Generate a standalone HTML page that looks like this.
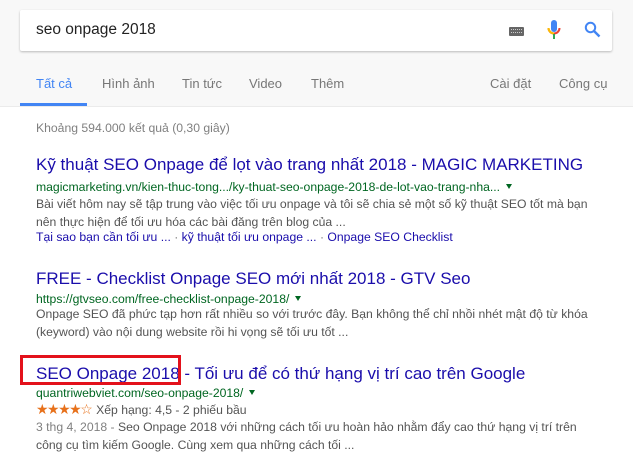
<!DOCTYPE html>
<html><head><meta charset="utf-8"><style>
body{margin:0;width:633px;height:460px;overflow:hidden;background:#fff;font-family:"Liberation Sans",Arial,sans-serif;position:relative}
.top{position:absolute;left:0;top:0;width:633px;height:106px;background:#f8f8f8;border-bottom:1px solid #ebebeb}
.a{position:absolute;white-space:nowrap}
.tab{position:absolute;top:76px;font-size:13px;color:#777;white-space:nowrap}
.t{font-size:17px;color:#1a0dab}
.u{font-size:12.2px;color:#006621}
.s{font-size:12.2px;color:#545454}
.l{font-size:12.2px;color:#1a0dab}
.tri{display:inline-block;width:0;height:0;border-left:3.5px solid transparent;border-right:3.5px solid transparent;border-top:5px solid #006621;margin-left:6px;vertical-align:2px}
</style></head><body>
<div class="top"></div>
<div style="position:absolute;left:20px;top:10px;width:592px;height:41px;background:#fff;box-shadow:0 1px 2px rgba(0,0,0,.25);border-radius:2px"></div>
<div class="a" style="left:36px;top:21px;font-size:15.5px;color:#222">seo onpage 2018</div>
<div style="position:absolute;left:509px;top:27px;width:15px;height:9px;background:#666;border-radius:1px"></div>
<div style="position:absolute;left:511px;top:29px;width:11px;height:2px;border-top:1px dotted #ccc;border-bottom:1px dotted #ccc"></div>
<svg style="position:absolute;left:547px;top:19px" width="14" height="22" viewBox="0 0 14 22"><rect x="4" y="1" width="6" height="12" rx="3" fill="#4285f4"/><path d="M1.5 9a5.5 5.5 0 0 0 11 0" stroke="#ea4335" stroke-width="2" fill="none"/><path d="M1.5 9a5.5 5.5 0 0 0 5.5 5.5" stroke="#fbbc05" stroke-width="2" fill="none"/><rect x="6" y="15" width="2" height="5" fill="#34a853"/></svg>
<svg style="position:absolute;left:584px;top:21px" width="17" height="17" viewBox="0 0 17 17"><circle cx="6.5" cy="6.5" r="4.7" stroke="#4285f4" stroke-width="2" fill="none"/><path d="M10 10l5.5 5.5" stroke="#4285f4" stroke-width="2.4"/></svg>
<div class="tab" style="left:36px;color:#4285f4">Tất cả</div>
<div class="tab" style="left:102px">Hình ảnh</div>
<div class="tab" style="left:182px">Tin tức</div>
<div class="tab" style="left:249px">Video</div>
<div class="tab" style="left:311px">Thêm</div>
<div class="tab" style="left:490px">Cài đặt</div>
<div class="tab" style="left:559px">Công cụ</div>
<div style="position:absolute;left:20px;top:103px;width:67px;height:3px;background:#4285f4"></div>
<div class="a" style="left:36px;top:121px;font-size:12.2px;color:#808080">Khoảng 594.000 kết quả (0,30 giây)</div>

<div class="a t" style="left:36px;top:155px">Kỹ thuật SEO Onpage để lọt vào trang nhất 2018 - MAGIC MARKETING</div>
<div class="a u" style="left:36px;top:180px">magicmarketing.vn/kien-thuc-tong.../ky-thuat-seo-onpage-2018-de-lot-vao-trang-nha...<span class="tri"></span></div>
<div class="a s" style="left:36px;top:197px">Bài viết hôm nay sẽ tập trung vào việc tối ưu onpage và tôi sẽ chia sẻ một số kỹ thuật SEO tốt mà bạn</div>
<div class="a s" style="left:36px;top:215px">nên thực hiện để tối ưu hóa các bài đăng trên blog của ...</div>
<div class="a l" style="left:36px;top:230px">Tại sao bạn cần tối ưu ... <span style="color:#777">·</span> kỹ thuật tối ưu onpage ... <span style="color:#777">·</span> Onpage SEO Checklist</div>

<div class="a t" style="left:36px;top:269px">FREE - Checklist Onpage SEO mới nhất 2018 - GTV Seo</div>
<div class="a u" style="left:36px;top:292px">https://gtvseo.com/free-checklist-onpage-2018/<span class="tri"></span></div>
<div class="a s" style="left:36px;top:307px">Onpage SEO đã phức tạp hơn rất nhiều so với trước đây. Bạn không thể chỉ nhồi nhét mật độ từ khóa</div>
<div class="a s" style="left:36px;top:325px">(keyword) vào nội dung website rồi hi vọng sẽ tối ưu tốt ...</div>

<div class="a t" style="left:36px;top:364px">SEO Onpage 2018 - Tối ưu để có thứ hạng vị trí cao trên Google</div>
<div style="position:absolute;left:20px;top:355px;width:155px;height:24px;border:3px solid #e3111b"></div>
<div class="a u" style="left:36px;top:386px">quantriwebviet.com/seo-onpage-2018/<span class="tri"></span></div>
<div class="a s" style="left:36px;top:401px"><span style="color:#e7711b;font-size:14px;letter-spacing:-1.5px">★★★★</span><span style="color:#e7711b;font-size:14px">☆</span> Xếp hạng: 4,5 - 2 phiếu bầu</div>
<div class="a s" style="left:36px;top:420px"><span style="color:#808080">3 thg 4, 2018 - </span>Seo Onpage 2018 với những cách tối ưu hoàn hảo nhằm đẩy cao thứ hạng vị trí trên</div>
<div class="a s" style="left:36px;top:438px">công cụ tìm kiếm Google. Cùng xem qua những cách tối ...</div>
</body></html>
